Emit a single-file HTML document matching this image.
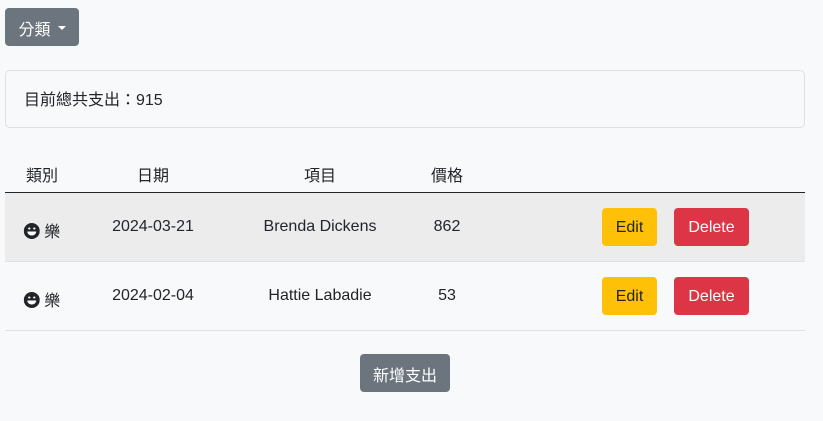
<!DOCTYPE html>
<html><head><meta charset="utf-8"><style>
body{margin:0;background:#f8f9fa;font-family:"Liberation Sans","Noto Sans CJK TC",sans-serif;color:#212529;font-size:16px;width:823px;height:421px;overflow:hidden;position:relative}
.btn{position:absolute;border-radius:4px;color:#fff;font-size:16px;display:flex;align-items:center;justify-content:center;box-sizing:border-box;padding-top:2px}
.card{position:absolute;left:5px;top:70px;width:800px;height:58px;border:1px solid #dfe0e1;border-radius:5px;box-sizing:border-box;padding-left:18px;line-height:59px;font-size:16px}
.row{position:absolute;left:5px;width:800px;box-sizing:border-box}
.c{position:absolute;top:0;transform:translateX(-50%);white-space:nowrap;font-size:16px}
</style></head><body>
<div class="btn" style="left:5px;top:8px;width:74px;height:38px;background:#6c757d">分類<span style="display:inline-block;margin-left:7px;border-left:4px solid transparent;border-right:4px solid transparent;border-top:4px solid #fff"></span></div>
<div class="card">目前總共支出：915</div>
<div class="row" style="top:160px;height:33px;border-bottom:1px solid #212529">
<span class="c" style="left:37px;top:2px">類別</span><span class="c" style="left:148px;top:2px">日期</span><span class="c" style="left:315px;top:2px">項目</span><span class="c" style="left:442px;top:2px">價格</span></div>
<div class="row" style="top:193px;height:69px;background:#ececed;border-bottom:1px solid #dee2e6">
<span class="c" style="left:37px;top:25px"><svg width="16" height="16" viewBox="0 0 16 16" style="vertical-align:-2px"><circle cx="8" cy="8" r="8" fill="#212529"/><path d="M3.5 8.5h9a4.5 4 0 0 1-9 0z" fill="#fff"/><ellipse cx="5.5" cy="5.5" rx="1.2" ry="1" fill="#fff"/><ellipse cx="10.5" cy="5.5" rx="1.2" ry="1" fill="#fff"/></svg> 樂</span>
<span class="c" style="left:148px;top:25px">2024-03-21</span><span class="c" style="left:315px;top:25px">Brenda Dickens</span><span class="c" style="left:442px;top:25px">862</span>
<div class="btn" style="left:597px;top:15px;width:55px;height:38px;background:#ffc107;color:#212529">Edit</div>
<div class="btn" style="left:669px;top:15px;width:75px;height:38px;background:#dc3545">Delete</div></div>
<div class="row" style="top:262px;height:69px;border-bottom:1px solid #dee2e6">
<span class="c" style="left:37px;top:25px"><svg width="16" height="16" viewBox="0 0 16 16" style="vertical-align:-2px"><circle cx="8" cy="8" r="8" fill="#212529"/><path d="M3.5 8.5h9a4.5 4 0 0 1-9 0z" fill="#fff"/><ellipse cx="5.5" cy="5.5" rx="1.2" ry="1" fill="#fff"/><ellipse cx="10.5" cy="5.5" rx="1.2" ry="1" fill="#fff"/></svg> 樂</span>
<span class="c" style="left:148px;top:25px">2024-02-04</span><span class="c" style="left:315px;top:25px">Hattie Labadie</span><span class="c" style="left:442px;top:25px">53</span>
<div class="btn" style="left:597px;top:15px;width:55px;height:38px;background:#ffc107;color:#212529">Edit</div>
<div class="btn" style="left:669px;top:15px;width:75px;height:38px;background:#dc3545">Delete</div></div>
<div class="btn" style="left:360px;top:354px;width:90px;height:38px;background:#6c757d">新增支出</div>
</body></html>
